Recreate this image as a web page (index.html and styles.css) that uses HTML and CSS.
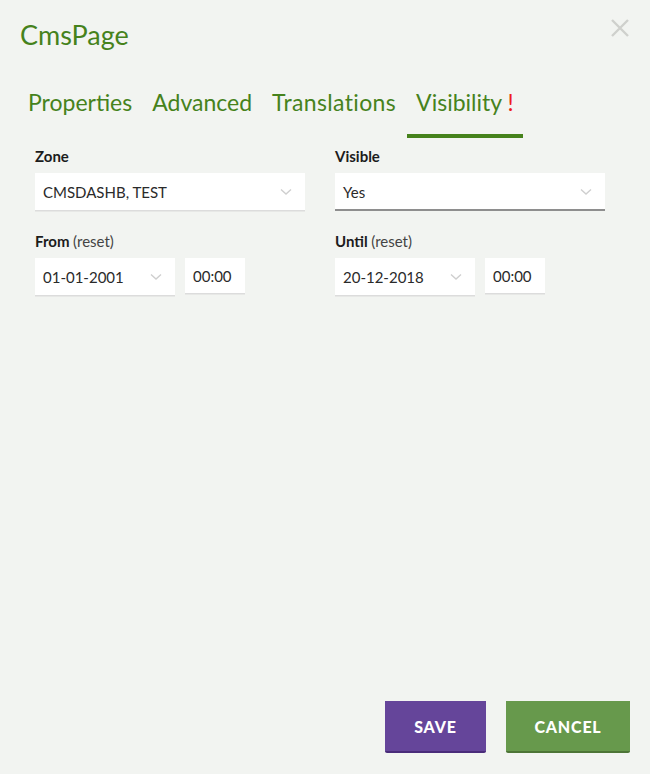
FILE: index.html
```html
<!DOCTYPE html>
<html>
<head>
<meta charset="utf-8">
<link rel="stylesheet" href="styles.css">
</head>
<body>
<div class="modal">
  <header class="header">
    <h1 class="title">CmsPage</h1>
    <button class="close" aria-label="Close">
      <svg width="20" height="20" viewBox="0 0 20 20"><path d="M2 2 L18 18 M18 2 L2 18" stroke="#cfd0cd" stroke-width="2.4" fill="none"/></svg>
    </button>
  </header>
  <nav class="tabs">
    <span class="tab">Properties</span>
    <span class="tab">Advanced</span>
    <span class="tab tab-wide">Translations</span>
    <span class="tab active">Visibility <span class="warn">!</span></span>
  </nav>
  <section class="form">
    <div class="field">
      <label class="label">Zone</label>
      <div class="select">
        <span>CMSDASHB, TEST</span>
        <svg class="chev" width="12" height="8" viewBox="0 0 12 8"><path d="M1 1.5 L6 6 L11 1.5" stroke="#cfcfcf" stroke-width="1.4" fill="none"/></svg>
      </div>
    </div>
    <div class="field">
      <label class="label">Visible</label>
      <div class="select underlined">
        <span>Yes</span>
        <svg class="chev" width="12" height="8" viewBox="0 0 12 8"><path d="M1 1.5 L6 6 L11 1.5" stroke="#cfcfcf" stroke-width="1.4" fill="none"/></svg>
      </div>
    </div>
    <div class="field">
      <label class="label">From <span class="reset">(reset)</span></label>
      <div class="daterow">
        <div class="select date">
          <span>01-01-2001</span>
          <svg class="chev" width="12" height="8" viewBox="0 0 12 8"><path d="M1 1.5 L6 6 L11 1.5" stroke="#cfcfcf" stroke-width="1.4" fill="none"/></svg>
        </div>
        <div class="time">00:00</div>
      </div>
    </div>
    <div class="field">
      <label class="label">Until <span class="reset">(reset)</span></label>
      <div class="daterow">
        <div class="select date">
          <span>20-12-2018</span>
          <svg class="chev" width="12" height="8" viewBox="0 0 12 8"><path d="M1 1.5 L6 6 L11 1.5" stroke="#cfcfcf" stroke-width="1.4" fill="none"/></svg>
        </div>
        <div class="time">00:00</div>
      </div>
    </div>
  </section>
  <footer class="footer">
    <button class="btn save">SAVE</button>
    <button class="btn cancel">CANCEL</button>
  </footer>
</div>
</body>
</html>
```
FILE: styles.css
```css
html, body {
  margin: 0;
  padding: 0;
}
body {
  background: #f2f4f1;
  font-family: Lato, "Open Sans", sans-serif;
  color: #222;
}
.modal {
  height: 774px;
  box-sizing: border-box;
  display: flex;
  flex-direction: column;
  padding: 0 20px 21px 20px;
}
.header {
  display: flex;
  justify-content: space-between;
  align-items: flex-start;
  height: 66px;
}
.title {
  margin: 0;
  padding-top: 19px;
  font-size: 27px;
  font-weight: 400;
  color: #46821c;
  line-height: 32px;
}
.close {
  background: none;
  border: 0;
  padding: 0;
  margin-top: 18px;
  margin-right: 0;
  width: 20px;
  height: 20px;
}
.tabs {
  display: flex;
  margin-left: -1px;
}
.tab {
  font-size: 23px;
  color: #46821c;
  padding: 21px 9px 17px 9px;
  line-height: 30px;
  border-bottom: 4px solid transparent;
  margin-right: 2px;
}
.tab-wide {
  letter-spacing: 0.35px;
}
.tab.active {
  border-bottom-color: #46821c;
}
.warn {
  color: #ee1c1c;
}
.form {
  display: grid;
  grid-template-columns: 270px 270px;
  column-gap: 30px;
  row-gap: 21px;
  padding: 9px 0 0 15px;
}
.field {
  display: flex;
  flex-direction: column;
}
.label {
  font-size: 15px;
  font-weight: 700;
  color: #1c1c1c;
  line-height: 18px;
  margin-bottom: 8px;
}
.reset {
  font-weight: 400;
  color: #444;
}
.select {
  background: #fff;
  height: 37px;
  box-sizing: border-box;
  padding: 0 13px 0 8px;
  display: flex;
  align-items: center;
  justify-content: space-between;
  font-size: 15px;
  color: #2a2a2a;
  box-shadow: 0 1.5px 0 #dcdcdc;
}
.select.underlined {
  border-bottom: 2px solid #8e8e8e;
  box-shadow: none;
  height: 38px;
  padding-top: 2px;
}
.daterow {
  display: flex;
  gap: 10px;
  align-items: flex-start;
}
.select.date {
  width: 140px;
}
.time {
  background: #fff;
  width: 60px;
  height: 35px;
  box-sizing: border-box;
  padding: 0 8px;
  display: flex;
  align-items: center;
  font-size: 15px;
  color: #2a2a2a;
  box-shadow: 0 1.5px 0 #dcdcdc;
}
.footer {
  margin-top: auto;
  display: flex;
  justify-content: flex-end;
  gap: 20px;
}
.btn {
  border: 0;
  height: 52px;
  box-sizing: border-box;
  font-family: Lato, sans-serif;
  font-weight: 900;
  font-size: 16px;
  letter-spacing: 0.8px;
  color: #fff;
  padding: 0;
  cursor: pointer;
}
.save {
  width: 101px;
  background: #65459a;
  border-bottom: 2px solid #4a2c7a;
  border-radius: 0 0 2px 2px;
}
.cancel {
  width: 124px;
  background: #67994c;
  border-bottom: 2px solid #4d7537;
  border-radius: 0 0 2px 2px;
}
```
